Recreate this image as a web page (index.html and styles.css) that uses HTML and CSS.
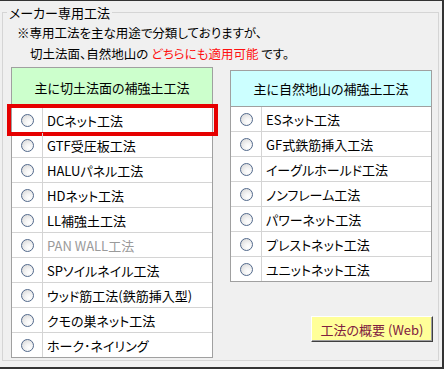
FILE: index.html
```html
<!DOCTYPE html>
<html lang="ja">
<head>
    <meta charset="UTF-8">
    <meta name="viewport" content="width=device-width, initial-scale=1.0">
    <title>メーカー専用工法</title>
    <link rel="stylesheet" href="styles.css">
</head>
<body>
    <div class="window">
        <div class="group">
            <span class="legend">メーカー専用工法</span>
            <p class="note">※専用工法を主な用途で分類しておりますが、</p>
            <p class="note indent">切土法面、自然地山の <span class="red">どちらにも適用可能</span> です。</p>

            <div class="panels">
                <div class="box box-left">
                    <div class="box-head green">主に切土法面の補強土工法</div>
                    <div class="row selected"><span class="radio-cell"><span class="radio"></span></span><span class="label">DCネット工法</span></div>
                    <div class="row"><span class="radio-cell"><span class="radio"></span></span><span class="label">GTF受圧板工法</span></div>
                    <div class="row"><span class="radio-cell"><span class="radio"></span></span><span class="label">HALUパネル工法</span></div>
                    <div class="row"><span class="radio-cell"><span class="radio"></span></span><span class="label">HDネット工法</span></div>
                    <div class="row"><span class="radio-cell"><span class="radio"></span></span><span class="label">LL補強土工法</span></div>
                    <div class="row"><span class="radio-cell"><span class="radio"></span></span><span class="label disabled">PAN WALL工法</span></div>
                    <div class="row"><span class="radio-cell"><span class="radio"></span></span><span class="label">SPソイルネイル工法</span></div>
                    <div class="row"><span class="radio-cell"><span class="radio"></span></span><span class="label">ウッド筋工法(鉄筋挿入型)</span></div>
                    <div class="row"><span class="radio-cell"><span class="radio"></span></span><span class="label">クモの巣ネット工法</span></div>
                    <div class="row last"><span class="radio-cell"><span class="radio"></span></span><span class="label">ホーク･ネイリング</span></div>
                </div>

                <div class="right-col">
                    <div class="box box-right">
                        <div class="box-head cyan">主に自然地山の補強土工法</div>
                        <div class="row"><span class="radio-cell"><span class="radio"></span></span><span class="label">ESネット工法</span></div>
                        <div class="row"><span class="radio-cell"><span class="radio"></span></span><span class="label">GF式鉄筋挿入工法</span></div>
                        <div class="row"><span class="radio-cell"><span class="radio"></span></span><span class="label">イーグルホールド工法</span></div>
                        <div class="row"><span class="radio-cell"><span class="radio"></span></span><span class="label">ノンフレーム工法</span></div>
                        <div class="row"><span class="radio-cell"><span class="radio"></span></span><span class="label">パワーネット工法</span></div>
                        <div class="row"><span class="radio-cell"><span class="radio"></span></span><span class="label">プレストネット工法</span></div>
                        <div class="row last"><span class="radio-cell"><span class="radio"></span></span><span class="label">ユニットネット工法</span></div>
                    </div>
                    <button type="button" class="web-btn">工法の概要 (Web)</button>
                </div>
            </div>
        </div>
    </div>
</body>
</html>
```

FILE: styles.css
```css
body {
    margin: 0;
    background-color: #f0f0f0;
    font-family: "Noto Sans CJK JP", "Noto Sans", sans-serif;
    font-size: 13px;
    font-feature-settings: "palt";
    color: #000;
}
.window {
    width: 444px;
    height: 369px;
    box-sizing: border-box;
    padding: 11px 3px 6px 2px;
    border-top: 1px solid #333;
    border-right: 2px solid #333;
    border-bottom: 2px solid #333;
}
.group {
    position: relative;
    height: 100%;
    box-sizing: border-box;
    border: 1px solid #d5d5d5;
    padding: 9px 0 0 8px;
}
.legend {
    position: absolute;
    top: -10px;
    left: 4px;
    padding: 0 2px;
    background-color: #f0f0f0;
    line-height: 19px;
}
.note {
    margin: 0 0 0 6px;
    font-size: 12.5px;
    line-height: 21px;
}
.note.indent {
    margin-left: 19px;
}
.red {
    color: #ff1010;
}
.panels {
    display: flex;
    align-items: flex-start;
    gap: 17px;
    margin-top: 3px;
}
.box {
    width: 202px;
    box-sizing: border-box;
    border: 1px solid #a0a0a0;
    background-color: #fff;
}
.box-head {
    display: flex;
    align-items: center;
    justify-content: center;
    border-bottom: 1px solid #a0a0a0;
}
.green {
    height: 39px;
    background-color: #ccffcc;
}
.cyan {
    height: 35px;
    background-color: #ccffff;
}
.right-col {
    display: flex;
    flex-direction: column;
    align-items: flex-end;
    margin-top: 3px;
}
.row {
    position: relative;
    display: flex;
    height: 24px;
    border-bottom: 1px solid #d4d4d4;
}
.row.last {
    border-bottom: none;
}
.radio-cell {
    display: flex;
    align-items: center;
    justify-content: center;
    width: 30px;
    border-right: 1px solid #d4d4d4;
}
.radio {
    width: 11px;
    height: 11px;
    border: 1px solid #52698c;
    border-radius: 50%;
    background: radial-gradient(circle at 65% 70%, #ffffff 0%, #f4f4f4 35%, #d2d2d2 100%);
}
.label {
    display: flex;
    align-items: center;
    padding-left: 4px;
    white-space: nowrap;
}
.disabled {
    color: #9a9a9a;
}
.selected::after {
    content: "";
    position: absolute;
    top: -4px;
    bottom: -4px;
    left: -5px;
    right: -6px;
    border: 4px solid #e60000;
}
.web-btn {
    margin-top: 34px;
    margin-right: -1px;
    width: 122px;
    height: 26px;
    padding: 0;
    font-family: inherit;
    font-size: 13px;
    font-feature-settings: "palt";
    color: #802040;
    background-color: #ffff99;
    border: 1px solid;
    border-color: #fff #404040 #404040 #fff;
    box-shadow: inset -1px -1px 0 #a0a0a0;
}
```
